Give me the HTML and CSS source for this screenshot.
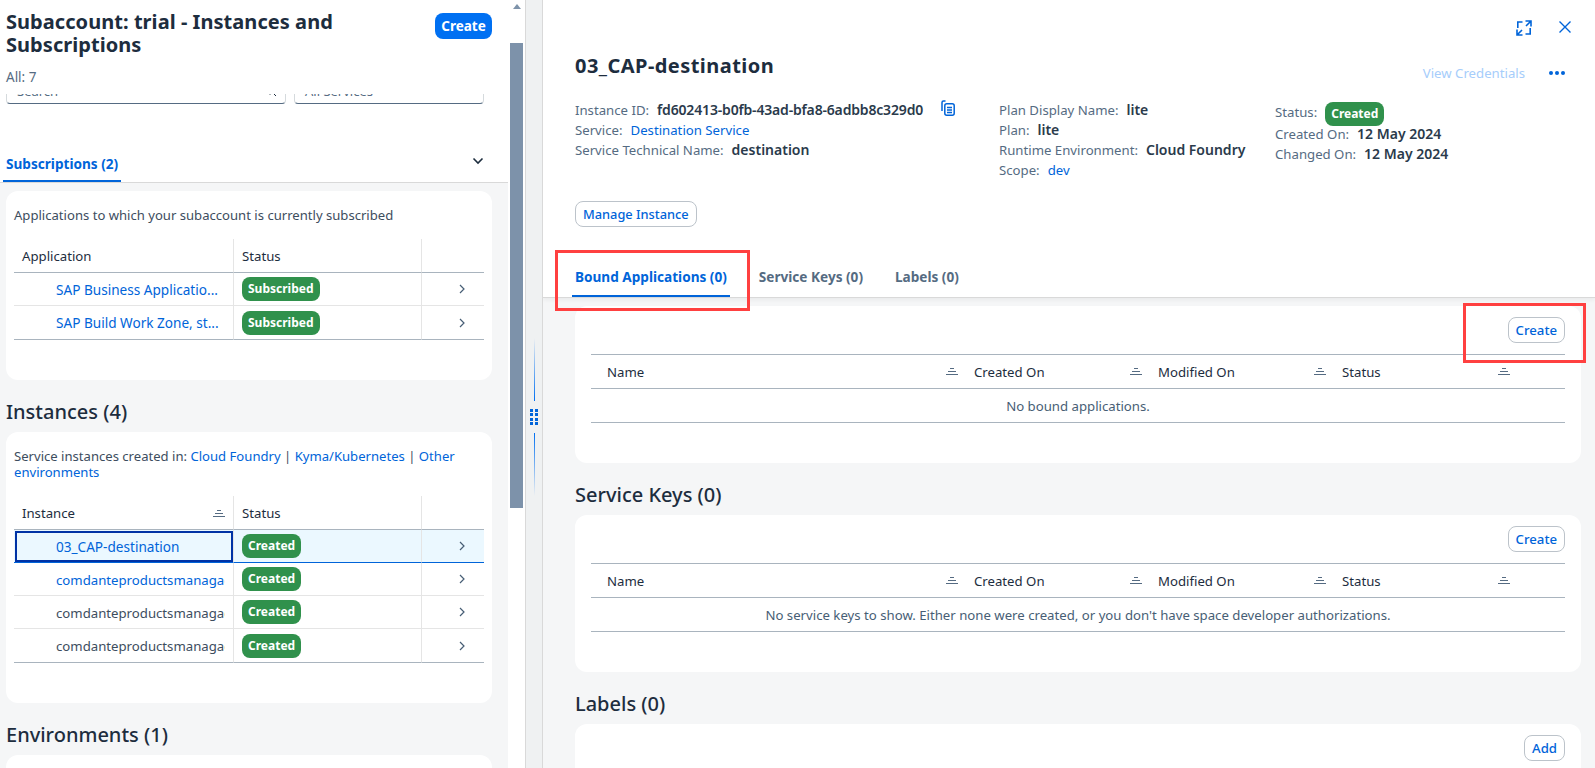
FILE: index.html
```html
<!DOCTYPE html>
<html lang="en">
<head>
<meta charset="utf-8">
<title>Instances and Subscriptions</title>
<link rel="stylesheet" href="styles.css">
</head>
<body>
<svg class="defs" width="0" height="0" aria-hidden="true">
  <symbol id="sort" viewBox="0 0 12 7"><path d="M4 .5h4M2 3.500h8M0 6.500h12" fill="none" stroke="currentColor"/></symbol>
  <symbol id="chev" viewBox="0 0 6 10"><path d="M1 1l4 4-4 4" fill="none" stroke="currentColor" stroke-width="1.200"/></symbol>
</svg>
<div class="app">
  <div class="master">
    <div class="master-scroll">
      <header class="m-head">
        <div class="m-title-row">
          <h1 class="m-title">Subaccount: trial - Instances and Subscriptions</h1>
          <button class="btn-primary">Create</button>
        </div>
        <div class="m-count">All: 7</div>
      </header>
      <div class="filters">
        <div class="filter filter-a"><span>Search</span><svg class="search-i" width="12" height="12" viewBox="0 0 12 12"><circle cx="5" cy="5" r="4" fill="none" stroke="#1d2d3e"/><path d="M8 8l3 3" stroke="#1d2d3e"/></svg></div>
        <div class="filter filter-b"><span>All Services</span></div>
      </div>
      <div class="m-tabs">
        <div class="m-tab">Subscriptions (2)</div>
        <svg class="m-chev" width="12" height="8" viewBox="0 0 12 8"><path d="M1.500 1.500L6 6l4.500-4.500" fill="none" stroke="#1d2d3e" stroke-width="1.600"/></svg>
      </div>
      <section class="card m-card">
        <p class="note">Applications to which your subaccount is currently subscribed</p>
        <table class="m-table">
          <thead><tr><th>Application</th><th>Status</th><th></th></tr></thead>
          <tbody>
            <tr><td class="name"><a class="clip wide">SAP Business Applicatio...</a></td><td><span class="badge">Subscribed</span></td><td class="arrow"><svg><use href="#chev"/></svg></td></tr>
            <tr><td class="name"><a class="clip wide">SAP Build Work Zone, st...</a></td><td><span class="badge">Subscribed</span></td><td class="arrow"><svg><use href="#chev"/></svg></td></tr>
          </tbody>
        </table>
      </section>
      <h2 class="heading m-heading">Instances (4)</h2>
      <section class="card m-card">
        <p class="note">Service instances created in: <a>Cloud Foundry</a> | <a>Kyma/Kubernetes</a> | <a>Other environments</a></p>
        <table class="m-table">
          <thead><tr><th><div class="th-in">Instance<svg class="sort"><use href="#sort"/></svg></div></th><th>Status</th><th></th></tr></thead>
          <tbody>
            <tr class="selected"><td class="name focus"><a class="clip wide">03_CAP-destination</a></td><td><span class="badge">Created</span></td><td class="arrow"><svg><use href="#chev"/></svg></td></tr>
            <tr><td class="name"><a class="clip">comdanteproductsmanagaement</a></td><td><span class="badge">Created</span></td><td class="arrow"><svg><use href="#chev"/></svg></td></tr>
            <tr><td class="name"><span class="clip">comdanteproductsmanagaement</span></td><td><span class="badge">Created</span></td><td class="arrow"><svg><use href="#chev"/></svg></td></tr>
            <tr><td class="name"><span class="clip">comdanteproductsmanagaement</span></td><td><span class="badge">Created</span></td><td class="arrow"><svg><use href="#chev"/></svg></td></tr>
          </tbody>
        </table>
      </section>
      <h2 class="heading m-heading">Environments (1)</h2>
      <section class="card m-card env"></section>
    </div>
    <div class="scrollbar">
      <div class="scroll-up"></div>
      <div class="scroll-thumb"></div>
    </div>
  </div>
  <div class="splitter">
    <div class="grip-line grip-top"></div>
    <svg class="grip" width="8" height="16" viewBox="0 0 8 16"><g fill="#0064d9"><rect x="0" y="0" width="3" height="3"/><rect x="5" y="0" width="3" height="3"/><rect x="0" y="4" width="3" height="3"/><rect x="5" y="4" width="3" height="3"/><rect x="0" y="9" width="3" height="3"/><rect x="5" y="9" width="3" height="3"/><rect x="0" y="13" width="3" height="3"/><rect x="5" y="13" width="3" height="3"/></g></svg>
    <div class="grip-line grip-bottom"></div>
  </div>
  <main class="detail">
    <header class="d-head">
      <div class="d-top">
        <svg class="icon" width="16" height="16" viewBox="0 0 16 16"><path d="M6.500 2H1.800v6M9.500 14h4.700V8M9.500 1h5.500v5.500M15 1l-5 5M1 9.500V15h5.500M1 15l5-5" fill="none" stroke="#0064d9" stroke-width="1.600"/></svg>
        <svg class="icon" width="14" height="14" viewBox="0 0 14 14"><path d="M1.500 1.500l11 11M12.500 1.500l-11 11" fill="none" stroke="#0064d9" stroke-width="1.400"/></svg>
      </div>
      <div class="d-title-row">
        <h1 class="d-title">03_CAP-destination</h1>
        <div class="d-actions">
          <span class="view-cred">View Credentials</span>
          <svg width="16" height="4" viewBox="0 0 16 4"><g fill="#0064d9"><circle cx="2" cy="2" r="2"/><circle cx="8" cy="2" r="2"/><circle cx="14" cy="2" r="2"/></g></svg>
        </div>
      </div>
      <div class="facts">
        <div class="fact-col col-1">
          <div class="fact"><span class="k">Instance ID:</span><b class="id">fd602413-b0fb-43ad-bfa8-6adbb8c329d0</b><svg class="copy" width="14" height="16" viewBox="0 0 14 16"><path d="M4.500 1H2.500A1.500 1.500 0 0 0 1 2.500V11" fill="none" stroke="#0064d9" stroke-width="1.500"/><rect x="3.800" y="3.800" width="9.400" height="11.400" rx="2" fill="none" stroke="#0064d9" stroke-width="1.500"/><path d="M6 7.500h5M6 10h5M6 12.500h5" stroke="#0064d9" stroke-width="1.300"/></svg></div>
          <div class="fact"><span class="k">Service:</span><a>Destination Service</a></div>
          <div class="fact"><span class="k">Service Technical Name:</span><b>destination</b></div>
        </div>
        <div class="fact-col col-2">
          <div class="fact"><span class="k">Plan Display Name:</span><b>lite</b></div>
          <div class="fact"><span class="k">Plan:</span><b>lite</b></div>
          <div class="fact"><span class="k">Runtime Environment:</span><b>Cloud Foundry</b></div>
          <div class="fact"><span class="k">Scope:</span><a>dev</a></div>
        </div>
        <div class="fact-col col-3">
          <div class="fact fact-status"><span class="k">Status:</span><span class="badge">Created</span></div>
          <div class="fact"><span class="k">Created On:</span><b>12 May 2024</b></div>
          <div class="fact"><span class="k">Changed On:</span><b>12 May 2024</b></div>
        </div>
      </div>
      <button class="btn-ghost manage">Manage Instance</button>
      <nav class="d-tabs">
        <div class="d-tab active">Bound Applications (0)</div>
        <div class="d-tab">Service Keys (0)</div>
        <div class="d-tab">Labels (0)</div>
      </nav>
    </header>
    <div class="d-body">
      <section class="card d-card first">
        <div class="toolbar"><button class="btn-ghost">Create</button></div>
        <table class="d-table">
          <thead><tr><th><div class="th-in">Name<svg class="sort"><use href="#sort"/></svg></div></th><th><div class="th-in">Created On<svg class="sort"><use href="#sort"/></svg></div></th><th><div class="th-in">Modified On<svg class="sort"><use href="#sort"/></svg></div></th><th><div class="th-in">Status<svg class="sort"><use href="#sort"/></svg></div></th><th></th></tr></thead>
          <tbody><tr><td colspan="5">No bound applications.</td></tr></tbody>
        </table>
      </section>
      <h2 class="heading">Service Keys (0)</h2>
      <section class="card d-card">
        <div class="toolbar"><button class="btn-ghost">Create</button></div>
        <table class="d-table">
          <thead><tr><th><div class="th-in">Name<svg class="sort"><use href="#sort"/></svg></div></th><th><div class="th-in">Created On<svg class="sort"><use href="#sort"/></svg></div></th><th><div class="th-in">Modified On<svg class="sort"><use href="#sort"/></svg></div></th><th><div class="th-in">Status<svg class="sort"><use href="#sort"/></svg></div></th><th></th></tr></thead>
          <tbody><tr><td colspan="5">No service keys to show. Either none were created, or you don't have space developer authorizations.</td></tr></tbody>
        </table>
      </section>
      <h2 class="heading">Labels (0)</h2>
      <section class="card d-card">
        <div class="toolbar"><button class="btn-ghost">Add</button></div>
      </section>
    </div>
    <div class="mark mark-tab"></div>
    <div class="mark mark-create"></div>
  </main>
</div>
</body>
</html>
```
FILE: styles.css
```css
* { box-sizing: border-box; }
html, body { margin: 0; height: 100%; overflow: hidden; }
body { font: 13.2px/16px "Noto Sans", "Open Sans", sans-serif; color: #1d2d3e; background: #fff; }
.defs { position: absolute; }
a { color: #0064d9; }
h1, h2, p { margin: 0; }
button { font: inherit; cursor: pointer; }

.app { display: grid; grid-template-columns: 526px 17px 1fr; height: 768px; }

/* master column */
.master { display: flex; height: 768px; overflow: hidden; border-right: 1px solid #d9d9d9; }
.master-scroll { width: 508px; flex: none; background: #f5f6f7; overflow: hidden; }
.m-head { background: #fff; padding: 10px 16px 9px 6px; position: relative; z-index: 1; }
.m-title-row { display: flex; justify-content: space-between; align-items: flex-start; }
.m-title { width: 400px; font-size: 20px; line-height: 23px; font-weight: 700; letter-spacing: 0.05px; }
.btn-primary { height: 26px; width: 57px; margin-top: 3px; padding: 0; border: 0; border-radius: 8px; background: #0070f2; color: #fff; font-weight: 700; font-size: 13.5px; }
.m-count { margin-top: 13px; color: #556b82; font-size: 13.5px; }

.filters { height: 10px; display: flex; align-items: flex-end; gap: 8px; padding-left: 6px; overflow: hidden; background: #fff; }
.filter { flex: none; height: 26px; display: flex; align-items: center; justify-content: space-between; padding: 0 10px; background: #fff; border: 1px solid #d5dadd; border-bottom-color: #556b82; border-radius: 4px; color: #556b82; font-size: 13px; }
.filter-a { width: 280px; }
.filter-b { width: 190px; }
.search-i { margin-right: -2px; }

.m-tabs { height: 79px; display: flex; justify-content: space-between; align-items: flex-start; padding: 0 24px 0 3px; background: #fff; border-bottom: 1px solid #d9d9d9; }
.m-tab { margin-top: 50px; height: 28px; padding: 0 3px; line-height: 20px; font-weight: 700; font-size: 13.6px; color: #0064d9; border-bottom: 2px solid #0064d9; width: 118px; white-space: nowrap; }
.m-chev { margin-top: 53px; }

.card { background: #fff; border-radius: 12px; }
.m-card { margin: 8px 0 0 6px; width: 486px; padding: 16px 8px 40px; }
.m-heading { margin-left: 6px; }
.heading { margin-top: 20px; margin-bottom: 8px; font-size: 20px; line-height: 24px; font-weight: 500; }
.m-heading + .m-card { margin-top: 0; }
.note { color: #3d4d5e; font-size: 13.1px; }

table { border-collapse: separate; border-spacing: 0; table-layout: fixed; width: 100%; }
.m-table { margin-top: 16px; }
.m-table th:nth-child(1) { width: 220px; }
.m-table th:nth-child(3) { width: 62px; }
.m-table th { height: 34px; padding: 1px 8px 0; text-align: left; font-weight: 400; border-bottom: 1px solid #a9b4be; border-right: 1px solid #e5e5e5; }
.m-table th:last-child, .m-table td:last-child { border-right: 0; }
.m-table td { height: 33px; padding: 0 8px; border-bottom: 1px solid #e5e5e5; border-right: 1px solid #e5e5e5; white-space: nowrap; overflow: hidden; }
.m-table tbody tr:last-child td { height: 34px; border-bottom-color: #a9b4be; }
.m-table td.name { padding: 1px 8px 0 42px; color: #3d4d5e; }
.clip { display: block; overflow: hidden; }
.wide { font-size: 13.6px; }
.th-in { display: flex; align-items: center; justify-content: space-between; }
.sort { width: 12px; height: 7px; color: #556b82; flex: none; }
.badge { display: inline-flex; align-items: center; height: 24px; padding: 0 6px; border-radius: 8px; background: #30914c; color: #fff; font-size: 12px; font-weight: 700; vertical-align: middle; }
.arrow { text-align: center; }
.arrow svg { width: 6px; height: 10px; color: #475e75; display: block; margin: 0 0 0 29px; }
.selected td { background: #ebf8ff; border-bottom-color: #0064d9 !important; }
.m-table td.focus { outline: 2px solid #0032a5; outline-offset: -3px; }
.env { min-height: 60px; }

/* scrollbar */
.scrollbar { width: 17px; background: #fff; position: relative; display: flex; flex-direction: column; align-items: center; }
.scroll-up { width: 0; height: 0; margin-top: 4px; border: 4px solid transparent; border-top: 0; border-bottom: 5px solid #7e93aa; }
.scroll-thumb { width: 13px; height: 465px; margin-top: 34px; background: #7d92aa; }

/* splitter */
.splitter { background: #eff1f2; border-right: 1px solid #d9d9d9; display: flex; flex-direction: column; align-items: center; padding-top: 338px; }
.grip-line { width: 1px; height: 63px; }
.grip-top { background: linear-gradient(to bottom, transparent, #0070f2); }
.grip { margin: 8px 0; flex: none; }
.grip-bottom { background: linear-gradient(to top, transparent, #0070f2); }

/* detail */
.detail { position: relative; height: 768px; overflow: hidden; background: #f5f6f7; }
.d-head { background: #fff; padding: 0 0 0 32px; border-bottom: 1px solid #d9d9d9; box-shadow: 0 2px 4px rgba(0,0,0,.05); position: relative; }
.d-top { height: 54px; display: flex; justify-content: flex-end; align-items: flex-start; gap: 26px; padding: 20px 23px 0 0; }
.d-title-row { height: 46px; display: flex; justify-content: space-between; align-items: flex-start; padding-right: 30px; }
.d-title { font-size: 20px; line-height: 24px; font-weight: 700; letter-spacing: 0.45px; }
.d-actions { display: flex; align-items: center; gap: 24px; margin-top: 11px; }
.view-cred { color: #a6cdfb; }
.facts { display: grid; grid-template-columns: 424px 276px 1fr; height: 101px; }
.fact { height: 20px; display: flex; align-items: center; gap: 8px; white-space: nowrap; }
.k { color: #556b82; }
.fact b { font-weight: 600; font-size: 14px; color: #2a3a4b; }
.fact b.id { letter-spacing: -0.17px; }
.copy { margin: -4px 0 0 10px; }
.col-3 { padding-top: 2px; }
.fact-status { height: 22px; align-items: flex-start; }
.fact-status .k { line-height: 20px; }
.btn-ghost { height: 26px; padding: 0 7px; border: 1px solid #bcc3ca; border-radius: 8px; background: #fff; color: #0064d9; font-weight: 500; }
.manage { display: block; font-size: 12.8px; }
.d-tabs { display: flex; gap: 26px; margin: 40px 0 0 -3px; }
.d-tab { height: 30px; padding: 0 3px; line-height: 20px; font-weight: 700; font-size: 13.6px; color: #556b82; border-bottom: 2px solid transparent; }
.d-tab.active { color: #0064d9; border-bottom-color: #0064d9; }
.d-body { padding: 8px 14px 0 32px; }
.d-card { padding: 11px 16px 40px; }
.toolbar { display: flex; justify-content: flex-end; }
.d-table { margin-top: 11px; }
.d-table th:nth-child(1) { width: 367px; }
.d-table th:nth-child(2), .d-table th:nth-child(3), .d-table th:nth-child(4) { width: 184px; }
.d-table th { height: 35px; padding: 0 0 0 16px; text-align: left; font-weight: 400; border-top: 1px solid #a9b4be; border-bottom: 1px solid #a9b4be; }
.d-table td { height: 34px; padding-top: 1px; text-align: center; border-bottom: 1px solid #a9b4be; color: #475e75; }
.mark { position: absolute; border: 3px solid #ff4040; pointer-events: none; }
.mark-tab { left: 12px; top: 250px; width: 195px; height: 61px; }
.mark-create { left: 920px; top: 303px; width: 123px; height: 60px; }
```
